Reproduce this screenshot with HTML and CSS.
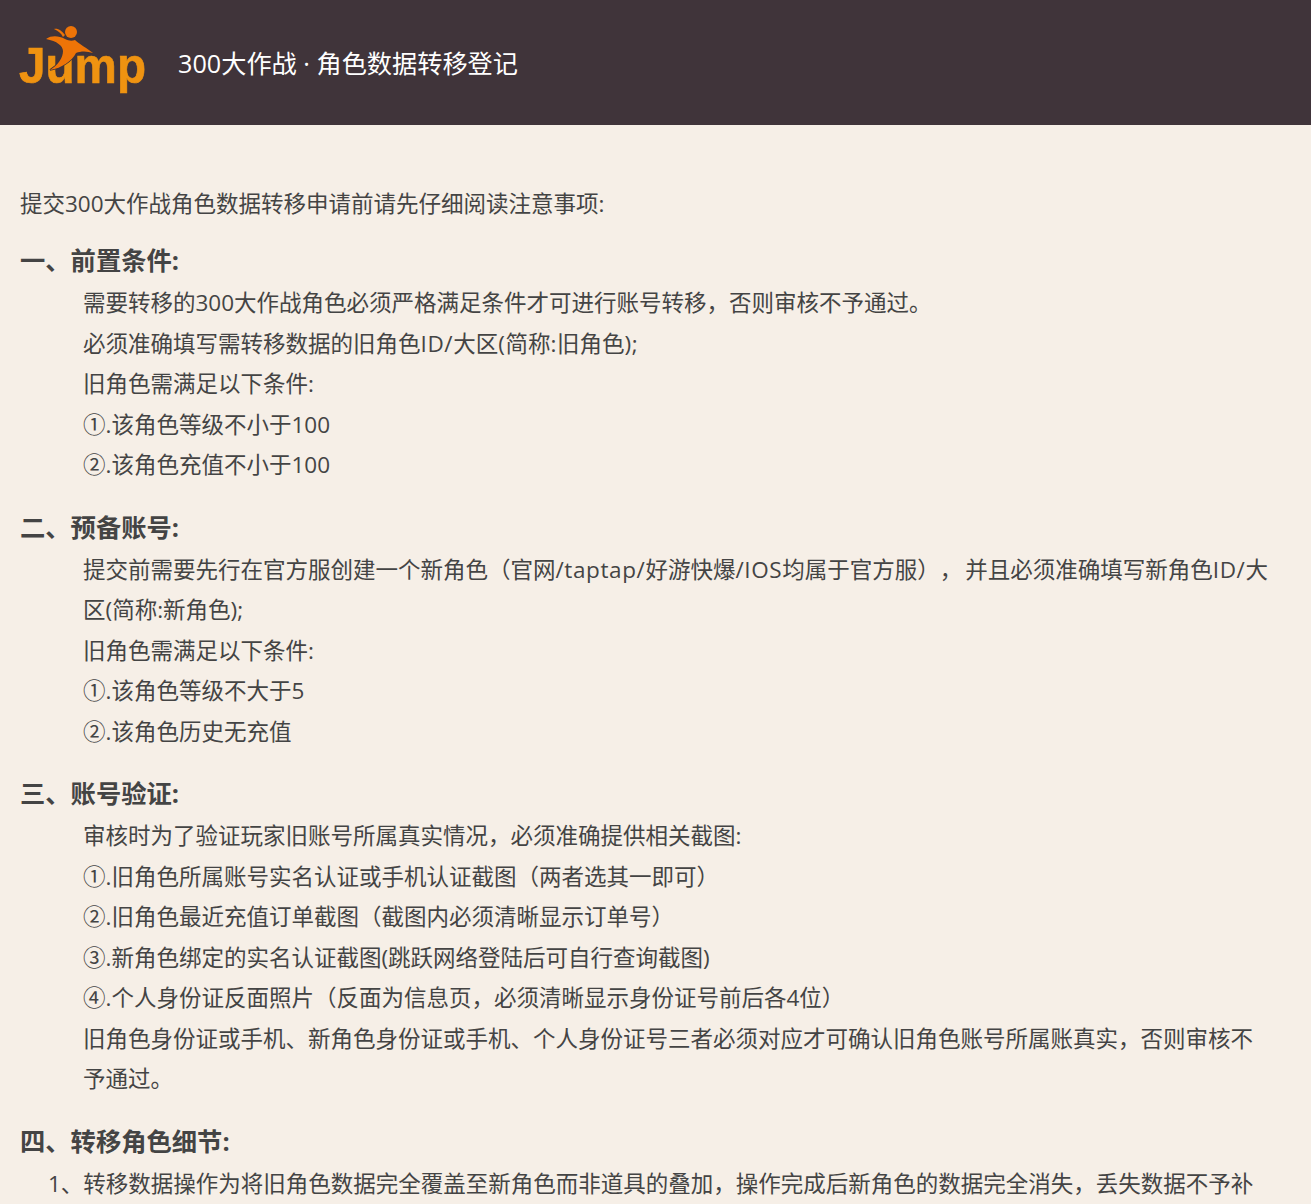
FILE: index.html
```html
<!DOCTYPE html>
<html lang="zh-CN">
<head>
<meta charset="utf-8">
<title>300大作战 · 角色数据转移登记</title>
<link rel="stylesheet" href="styles.css">
</head>
<body>
<header class="topbar">
  <svg class="logo" width="127" height="67" viewBox="0 0 127 67" aria-label="Jump">
    <text class="logo-word" x="0" y="57" textLength="127" lengthAdjust="spacingAndGlyphs">Jump</text>
    <circle class="logo-fig" cx="52" cy="6" r="6"/>
    <path class="logo-fig logo-body" d="M27 13 C33 9 40 10 46 13 C50 15 53 15 56 14 C60 18 68 22 74 27 C68 25 62 25 57 27 C53 35 43 42 31 44 C39 39 44 32 44 25 C44 20 38 15 27 13 Z"/>
    <path class="logo-fig" d="M35 3 C39 2 43 5 46 9 L44 11 C42 7 39 5 35 3 Z"/>
  </svg>
  <h1 class="title">300大作战 · 角色数据转移登记</h1>
</header>
<main class="content">
  <p class="intro">提交300大作战角色数据转移申请前请先仔细阅读注意事项:</p>

  <h2 class="heading">一、前置条件:</h2>
  <ul class="rules">
    <li>需要转移的300大作战角色必须严格满足条件才可进行账号转移，否则审核不予通过。</li>
    <li>必须准确填写需转移数据的旧角色<span class="latin">ID/</span>大区<span class="latin">(</span>简称<span class="latin">:</span>旧角色<span class="latin">);</span></li>
    <li>旧角色需满足以下条件:</li>
    <li>①.该角色等级不小于100</li>
    <li>②.该角色充值不小于100</li>
  </ul>

  <h2 class="heading">二、预备账号:</h2>
  <ul class="rules">
    <li>提交前需要先行在官方服创建一个新角色（官网<span class="latin">/taptap/</span>好游快爆<span class="latin">/IOS</span>均属于官方服）<span class="comma">，</span>并且必须准确填写新角色<span class="latin">ID/</span>大区(简称:新角色);</li>
    <li>旧角色需满足以下条件:</li>
    <li>①.该角色等级不大于5</li>
    <li>②.该角色历史无充值</li>
  </ul>

  <h2 class="heading">三、账号验证:</h2>
  <ul class="rules">
    <li>审核时为了验证玩家旧账号所属真实情况，必须准确提供相关截图:</li>
    <li>①.旧角色所属账号实名认证或手机认证截图（两者选其一即可）</li>
    <li>②.旧角色最近充值订单截图（截图内必须清晰显示订单号）</li>
    <li>③.新角色绑定的实名认证截图(跳跃网络登陆后可自行查询截图)</li>
    <li>④.个人身份证反面照片（反面为信息页，必须清晰显示身份证号前后各4位）</li>
    <li>旧角色身份证或手机、新角色身份证或手机、个人身份证号三者必须对应才可确认旧角色账号所属账真实，否则审核不予通过。</li>
  </ul>

  <h2 class="heading">四、转移角色细节:</h2>
  <ul class="rules">
    <li class="numbered">1、转移数据操作为将旧角色数据完全覆盖至新角色而非道具的叠加，操作完成后新角色的数据完全消失，丢失数据不予补</li>
  </ul>
</main>
</body>
</html>
```

FILE: styles.css
```css
* {
  box-sizing: border-box;
}

html,
body {
  margin: 0;
  height: 1204px;
  overflow: hidden;
}

body {
  background: #f6efe7;
  color: #444;
  font-family: "Open Sans", "Noto Sans CJK SC", sans-serif;
  font-size: 22.5px;
  line-height: 1.8;
  text-spacing-trim: space-all;
}

.topbar {
  display: flex;
  align-items: center;
  gap: 32px;
  height: 125px;
  padding: 0 19px;
  background: #40343a;
  color: #fff;
}

.logo {
  flex: none;
  overflow: visible;
  margin-top: -7px;
}

.logo-word {
  font-family: "Liberation Sans", sans-serif;
  font-weight: 700;
  font-size: 50px;
  fill: #ef9311;
  stroke: #ef9311;
  stroke-width: 0.6px;
}

.logo-fig {
  fill: #ee7407;
}

.logo-body {
  stroke: #40343a;
  stroke-width: 1.5px;
  paint-order: stroke;
}

.title {
  margin: 0;
  font-size: 25.2px;
  font-weight: 400;
  line-height: 36px;
}

.content {
  padding: 59px 40px 0 20px;
}

.intro {
  margin: 0;
}

.heading {
  margin: 17.5px 0 5px;
  font-size: 25.3px;
  font-weight: 700;
  line-height: 36px;
}

.rules {
  list-style: none;
  margin: 0 0 23px;
  padding: 0 0 0 63px;
}

.latin {
  letter-spacing: 0.6px;
}

.comma {
  letter-spacing: 3px;
}

.numbered {
  text-indent: -35px;
}
```
